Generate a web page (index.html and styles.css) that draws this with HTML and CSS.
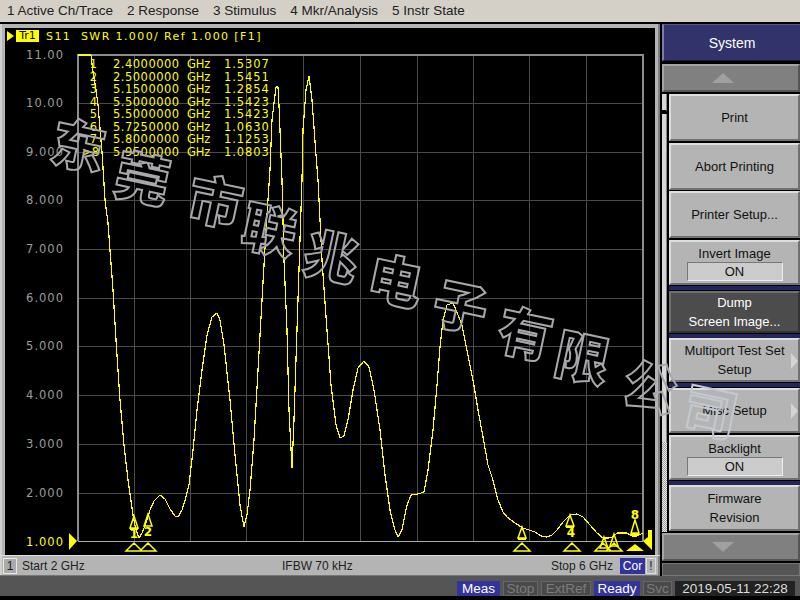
FILE: index.html
```html
<!DOCTYPE html>
<html lang="en">
<head>
    <meta charset="UTF-8">
    <title>Network Analyzer</title>
    <link rel="stylesheet" href="styles.css">
</head>
<body>
<div class="app">
    <nav class="menu">
        <span>1 Active Ch/Trace</span>
        <span>2 Response</span>
        <span>3 Stimulus</span>
        <span>4 Mkr/Analysis</span>
        <span>5 Instr State</span>
    </nav>

    <div class="main">
        <section class="channel">
            <div class="screen">
                <div class="trace-head">
                    <i class="tr-arrow"></i>
                    <span class="tr-tag">Tr1</span>
                    <span class="tr-title">S11&nbsp; SWR 1.000/ Ref 1.000 [F1]</span>
                </div>
                <svg class="plot" width="650" height="527" viewBox="5 28 650 527">
                    <g class="grid">
                        <path d="M134 55V541M190 55V541M246 55V541M303 55V541M360 55V541M417 55V541M473 55V541M529 55V541M586 55V541"/>
                        <path d="M78 103H643M78 152H643M78 200H643M78 249H643M78 298H643M78 346H643M78 395H643M78 444H643M78 493H643"/>
                    </g>
                    <path class="frame" d="M78 541V55H643V541"/>
                    <path class="baseline" d="M78 541H643"/>
                    <g class="axis">
                        <text x="64" y="59">11.00</text>
                        <text x="64" y="107">10.00</text>
                        <text x="64" y="156">9.000</text>
                        <text x="64" y="204">8.000</text>
                        <text x="64" y="253">7.000</text>
                        <text x="64" y="302">6.000</text>
                        <text x="64" y="350">5.000</text>
                        <text x="64" y="399">4.000</text>
                        <text x="64" y="448">3.000</text>
                        <text x="64" y="497">2.000</text>
                        <text class="axis-ref" x="64" y="546">1.000</text>
                    </g>
                    <polyline class="trace" points="78,55 91,55 93,72 96,90 98,105 102,152 105,200 108,223 110,250 113,290 116,340 120,400 124,445 128,480 133,515 136,530 139,538 142,533 146,523 150,510 154,501 160,495 165,499 170,509 175,516 178,517 182,510 186,497 189,485 193,450 197,410 202,370 207,335 212,317 217,313 220,320 224,345 230,400 235,455 240,505 244,527 247,515 250,490 254,440 258,370 262,300 266,230 270,170 272,120 275,95 276,87 278,87 279,105 282,180 284,260 287,330 289,410 292,468 294,420 297,330 300,240 302,180 303,130 306,90 309,76 312,100 316,155 318,180 322,260 327,330 331,385 336,425 340,438 344,436 348,420 353,390 358,368 364,361 369,367 374,390 380,430 385,475 390,510 395,530 398,537 402,530 407,505 411,495 418,494 424,492 428,470 433,430 437,385 440,347 443,320 447,305 453,303 458,315 462,325 467,350 473,380 478,410 483,437 488,465 493,480 498,500 503,512 507,517 515,523 523,528 535,532 541,536 547,537 552,535 557,530 563,522 570,515 577,514 583,517 590,525 597,533 603,538 609,538 613,537 617,533 627,533 632,536 637,536 643,533"/>
                    <g class="marks">
                        <path d="M134 516L130 528H138ZM148 514L144 526H152ZM522 527L518 538H526ZM570 515L566 526H574ZM604 537L600 548H608ZM614 534L610 546H618ZM635 520L631 533H639Z"/>
                        <path d="M134 543L126 551H142ZM148 543L140 551H156ZM522 543L514 551H530ZM572 543L564 551H580ZM603 543L595 551H611ZM614 543L606 551H622Z"/>
                        <path class="solid" d="M635 544L626 551H644ZM130 528H138V530H130ZM518 538H526V540H518ZM566 526H574V528H566ZM631 533H639V535H631ZM69 533L77 541L69 550ZM652 530V550L643 541L648 537V530Z"/>
                        <text x="134" y="538">1</text>
                        <text x="148" y="536">2</text>
                        <text x="571" y="537">4</text>
                        <text x="635" y="519">8</text>
                    </g>
                </svg>
                <table class="markers">
                    <tr><td>1</td><td>2.4000000</td><td>GHz</td><td>1.5307</td></tr>
                    <tr><td>2</td><td>2.5000000</td><td>GHz</td><td>1.5451</td></tr>
                    <tr><td>3</td><td>5.1500000</td><td>GHz</td><td>1.2854</td></tr>
                    <tr><td>4</td><td>5.5000000</td><td>GHz</td><td>1.5423</td></tr>
                    <tr><td>5</td><td>5.5000000</td><td>GHz</td><td>1.5423</td></tr>
                    <tr><td>6</td><td>5.7250000</td><td>GHz</td><td>1.0630</td></tr>
                    <tr><td>7</td><td>5.8000000</td><td>GHz</td><td>1.1253</td></tr>
                    <tr><td>&gt;8</td><td>5.9500000</td><td>GHz</td><td>1.0803</td></tr>
                </table>
            </div>
            <footer class="chan-status">
                <span class="chan-no">1</span>
                <span class="start">Start 2 GHz</span>
                <span class="ifbw">IFBW 70 kHz</span>
                <span class="stop">Stop 6 GHz</span>
                <span class="cor">Cor</span>
                <span class="warn">!</span>
            </footer>
        </section>

        <aside class="softkeys">
            <div class="sys-title">System</div>
            <button class="key arrow"><i class="up"></i></button>
            <div class="key-area">
                <div class="scroll"><i class="scroll-cap"></i><i class="scroll-thumb"></i><i class="scroll-track"></i></div>
                <div class="key-list">
                    <button class="key h47">Print</button>
                    <button class="key h47 mt2">Abort Printing</button>
                    <button class="key h47 mt1">Printer Setup...</button>
                    <button class="key toggle mt2">Invert Image<b>ON</b></button>
                    <i class="navy"></i>
                    <button class="key dark">Dump<br>Screen Image...</button>
                    <i class="navy"></i>
                    <button class="key multi">Multiport Test Set<br>Setup<i class="more"></i></button>
                    <i class="navy"></i>
                    <button class="key h45 mt1">Misc Setup<i class="more"></i></button>
                    <button class="key toggle mt2">Backlight<b>ON</b></button>
                    <i class="navy"></i>
                    <button class="key h46">Firmware<br>Revision</button>
                </div>
            </div>
            <button class="key arrow down-key"><i class="down"></i></button>
            <div class="key-blank"></div>
        </aside>
    </div>

    <footer class="status">
        <span class="st on w43">Meas</span>
        <span class="st off w35">Stop</span>
        <span class="st off w50">ExtRef</span>
        <span class="st on w46">Ready</span>
        <span class="st off w29">Svc</span>
        <span class="st clock">2019-05-11 22:28</span>
    </footer>
</div>

<svg class="stamp" width="800" height="600" viewBox="0 0 800 600">
    <text transform="translate(78 147) rotate(12)" y="19">东</text>
    <text transform="translate(142 180) rotate(12)" y="19">莞</text>
    <text transform="translate(215 203) rotate(12)" y="19">市</text>
    <text transform="translate(269 231) rotate(12)" y="19">联</text>
    <text transform="translate(331 258) rotate(12)" y="19">兆</text>
    <text transform="translate(395 282) rotate(12)" y="19">电</text>
    <text transform="translate(460 308) rotate(12)" y="19">子</text>
    <text transform="translate(525 335) rotate(12)" y="19">有</text>
    <text transform="translate(582 359) rotate(12)" y="19">限</text>
    <text transform="translate(650 388) rotate(12)" y="19">公</text>
    <text class="stamp-soft" transform="translate(710 413) rotate(12)" y="19">司</text>
</svg>
</body>
</html>
```

FILE: styles.css
```css
* {
    box-sizing: border-box;
}

html, body {
    margin: 0;
    height: 100%;
}

body {
    position: relative;
    width: 800px;
    height: 600px;
    overflow: hidden;
    background: #000;
    font-family: "Liberation Sans", Arial, sans-serif;
    font-size: 13px;
}

button {
    font: inherit;
}

.app {
    display: flex;
    flex-direction: column;
    height: 600px;
}

/* top menu */
.menu {
    display: flex;
    gap: 14px;
    height: 22px;
    padding: 3px 0 0 7px;
    background: #d4d0c8;
    color: #222;
    font-size: 13.5px;
    line-height: 16px;
    white-space: nowrap;
}

.main {
    display: flex;
    height: 552px;
    margin-top: 2px;
}

/* left side: screen with channel status */
.channel {
    display: flex;
    flex-direction: column;
    width: 660px;
    margin-right: 2px;
    padding: 4px 3px 0 3px;
    background: #b4b4b4;
    border-left: 2px solid #d0d0d0;
    border-right: 2px solid #808080;
}

.screen {
    position: relative;
    flex: none;
    width: 650px;
    height: 527px;
    background: #000;
}

.trace-head {
    position: absolute;
    top: 2px;
    left: 2px;
    display: flex;
    align-items: center;
    height: 12px;
    color: #ff0;
    font-family: "DejaVu Sans", sans-serif;
    font-size: 11px;
    white-space: nowrap;
}

.tr-arrow {
    width: 0;
    height: 0;
    margin-right: 2px;
    border-left: 7px solid #ff0;
    border-top: 5px solid transparent;
    border-bottom: 5px solid transparent;
}

.tr-tag {
    width: 23px;
    height: 12px;
    margin-right: 7px;
    background: #ff0;
    color: #000;
    line-height: 12px;
    text-align: center;
}

.tr-title {
    letter-spacing: 1.4px;
}

.plot {
    display: block;
    position: absolute;
    top: 0;
    left: 0;
}

.grid path {
    fill: none;
    stroke: #4a4a4a;
    stroke-width: 1;
    shape-rendering: crispEdges;
}

.frame {
    fill: none;
    stroke: #8c8c8c;
    stroke-width: 1.5;
    shape-rendering: crispEdges;
}

.baseline {
    stroke: #aaa;
    stroke-width: 1;
    shape-rendering: crispEdges;
}

.axis text {
    fill: #9c9c9c;
    font-family: "DejaVu Sans", sans-serif;
    font-size: 11.5px;
    letter-spacing: 1px;
    text-anchor: end;
}

.axis .axis-ref {
    fill: #ff0;
}

.trace {
    fill: none;
    stroke: #ff0;
    stroke-width: 1.2;
    stroke-linejoin: bevel;
    shape-rendering: crispEdges;
}

.marks path {
    fill: none;
    stroke: #ff0;
    stroke-width: 1.5;
}

.marks .solid {
    fill: #ff0;
    stroke: none;
}

.marks text {
    fill: #ff0;
    font-family: "DejaVu Sans", sans-serif;
    font-size: 12px;
    font-weight: bold;
    text-anchor: middle;
}

.markers {
    position: absolute;
    top: 30px;
    left: 77px;
    border-collapse: collapse;
    table-layout: fixed;
    width: 190px;
    color: #ff0;
    font-family: "DejaVu Sans", sans-serif;
    font-size: 11.5px;
    line-height: 12.5px;
    white-space: nowrap;
}

.markers td {
    padding: 0;
    height: 12.5px;
}

.markers td:nth-child(1) {
    width: 31px;
    padding-right: 16px;
    text-align: right;
}

.markers td:nth-child(2) {
    width: 74px;
    letter-spacing: 0.5px;
}

.markers td:nth-child(3) {
    width: 37px;
    letter-spacing: -0.2px;
}

.markers td:nth-child(4) {
    width: 48px;
    letter-spacing: 0.9px;
}

.chan-status {
    position: relative;
    flex: 1;
    display: flex;
    align-items: center;
    margin-left: -5px;
    margin-right: -5px;
    padding-left: 3px;
    color: #222;
    font-size: 12px;
    line-height: 16px;
    border-top: 1px solid #ddd;
    border-bottom: 1px solid #777;
}

.chan-no {
    width: 14px;
    height: 16px;
    background: #aaa;
    border: 1px solid #e8e8e8;
    text-align: center;
    line-height: 14px;
}

.start {
    margin-left: 5px;
    width: 260px;
}

.ifbw {
    width: 269px;
}

.stop {
    width: 69px;
}

.cor {
    width: 25px;
    height: 16px;
    background: #33339c;
    color: #fff;
    text-align: center;
}

.warn {
    width: 10px;
    margin-left: 1px;
    height: 16px;
    text-align: center;
    border: 1px solid #ddd;
    line-height: 14px;
}

/* softkeys */
.softkeys {
    display: flex;
    flex-direction: column;
    width: 138px;
}

.sys-title {
    height: 37px;
    background: #33336b;
    border-left: 2px solid #7c7cb0;
    border-top: 1px solid #55558c;
    border-bottom: 1px solid #15153c;
    color: #fff;
    font-size: 14px;
    line-height: 36px;
    text-align: center;
}

.key {
    position: relative;
    display: block;
    flex: none;
    width: 100%;
    padding: 0;
    background: #b4b4b4;
    border: 2px solid;
    border-color: #dedede #707070 #707070 #dedede;
    color: #111;
    line-height: 19px;
    text-align: center;
}

.arrow {
    height: 28px;
    margin-top: 3px;
    background: #808080;
    border-color: #a4a4a4 #555 #555 #a4a4a4;
}

.up, .down {
    position: absolute;
    top: 7px;
    left: 48px;
    width: 0;
    height: 0;
    border-left: 11px solid transparent;
    border-right: 11px solid transparent;
}

.up {
    border-bottom: 10px solid #a0a0a0;
}

.down {
    border-top: 10px solid #a0a0a0;
}

.key-area {
    display: flex;
    flex: none;
    height: 438px;
    margin-top: 2px;
}

.scroll {
    display: flex;
    flex-direction: column;
    width: 7px;
    flex: none;
}

.scroll i {
    display: block;
    width: 5px;
    background: #d8d8d8;
    border-right: 1px solid #888;
}

.scroll-cap {
    height: 18px;
    border-bottom: 2px solid #000;
}

.scroll .scroll-thumb {
    height: 328px;
    margin-top: 2px;
}

.scroll .scroll-track {
    flex: 1;
    background: repeating-conic-gradient(#eee 0 25%, #999 0 50%) 0 0 / 2px 2px;
    border: 0;
}

.key-list {
    display: flex;
    flex-direction: column;
    flex: 1;
}

.h47 {
    height: 47px;
}

.h46 {
    height: 46px;
}

.h45 {
    height: 45px;
}

.mt1 {
    margin-top: 1px;
}

.mt2 {
    margin-top: 2px;
}

.toggle {
    height: 45px;
    padding-top: 1px;
    line-height: 17px;
}

.toggle b {
    display: block;
    width: 96px;
    height: 19px;
    margin: 0 auto;
    background: #ccc;
    border: 1px solid;
    border-color: #777 #eee #eee #777;
    font-weight: normal;
    line-height: 17px;
}

.navy {
    display: block;
    flex: none;
    height: 4px;
    margin-top: 1px;
    background: #25255e;
}

.key.dark {
    height: 42px;
    margin-top: 1px;
    background: #4c4c4c;
    border-color: #707070 #333 #333 #707070;
    color: #fff;
}

.multi {
    height: 44px;
}

.more {
    position: absolute;
    top: 13px;
    right: 0;
    width: 0;
    height: 0;
    border-left: 7px solid #d4d4d4;
    border-top: 8px solid transparent;
    border-bottom: 8px solid transparent;
}

.down-key {
    margin-top: 1px;
}

.key-blank {
    height: 13px;
    margin-top: 2px;
    background: #555;
    border: 1px solid #777;
}

/* bottom status */
.status {
    display: flex;
    align-items: flex-start;
    gap: 3px;
    height: 24px;
    padding: 5px 5px 0 457px;
    background: linear-gradient(#555 0 20px, #000 20px);
    color: #fff;
    font-size: 13.5px;
    white-space: nowrap;
}

.st {
    height: 15px;
    line-height: 15px;
    text-align: center;
}

.on {
    background: #33339c;
}

.off {
    background: #4a4a4a;
    border: 1px solid #666;
    color: #7c7c7c;
    line-height: 13px;
}

.w43 { width: 43px; }
.w35 { width: 35px; }
.w50 { width: 50px; }
.w46 { width: 46px; }
.w29 { width: 29px; }

.clock {
    flex: 1;
    background: #222;
    color: #ddd;
}

/* watermark over the whole window */
.stamp {
    position: absolute;
    top: 0;
    left: 0;
    pointer-events: none;
}

.stamp text {
    fill: transparent;
    stroke: #a8a8ac;
    stroke-width: 2;
    font-family: "Noto Sans CJK SC", sans-serif;
    font-size: 54px;
    font-weight: 900;
    text-anchor: middle;
}

.stamp .stamp-soft {
    stroke: #c4c8d0;
}
```
